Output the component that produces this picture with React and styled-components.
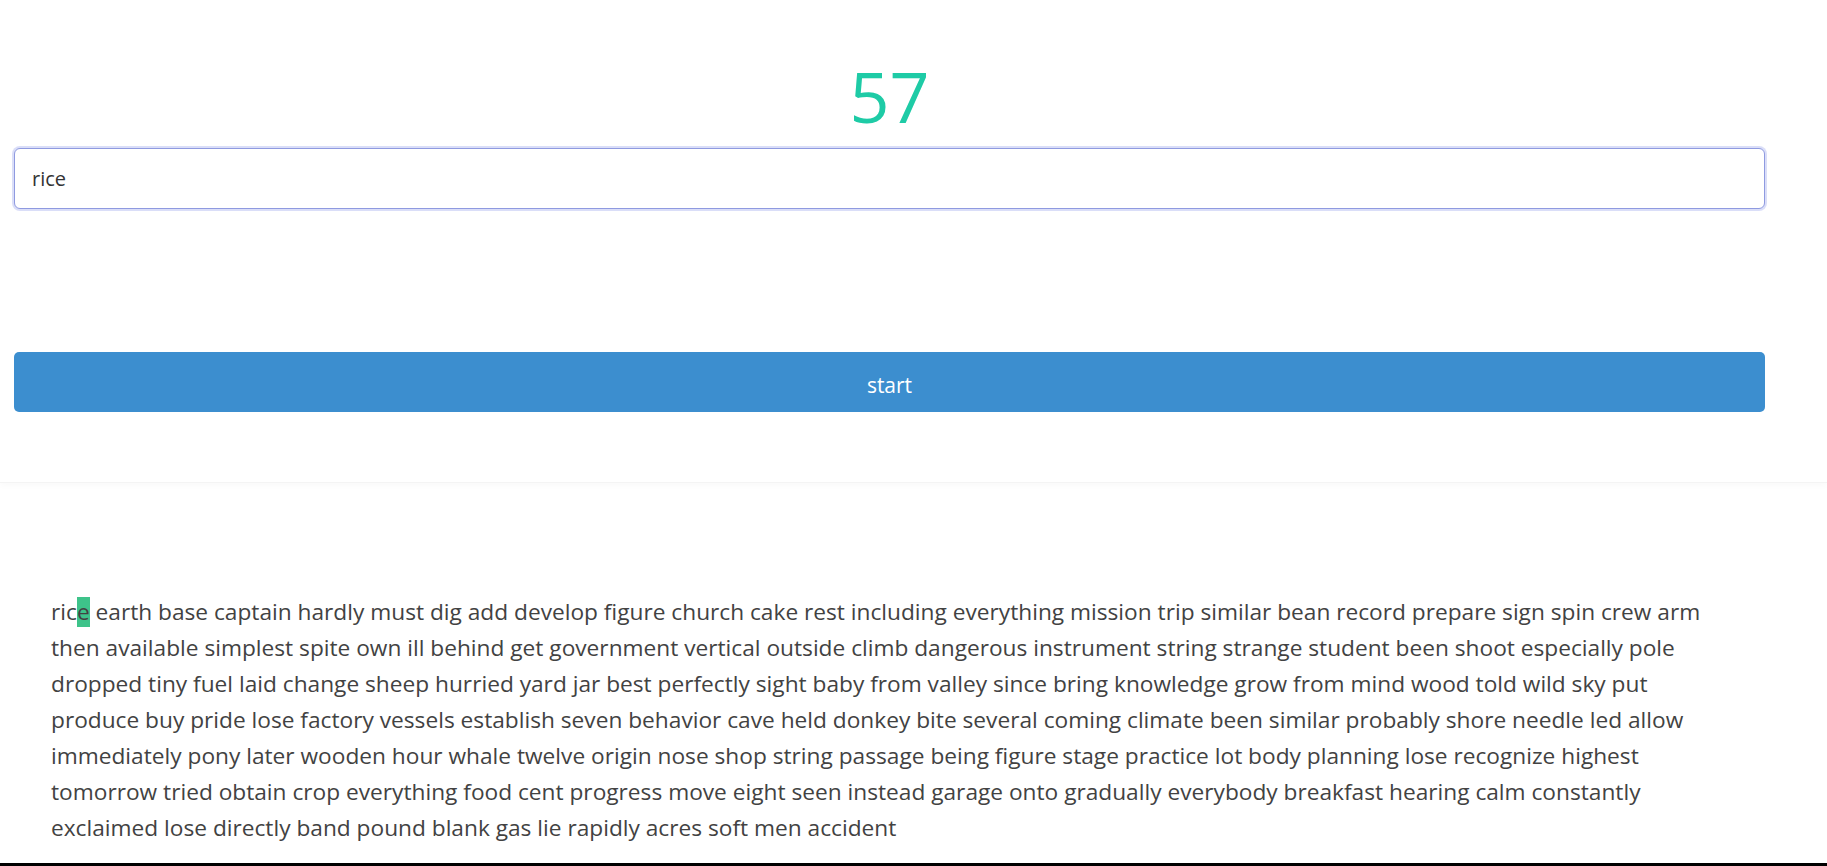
import React from "react";
import styled, { createGlobalStyle } from "styled-components";

const GlobalStyle = createGlobalStyle`
  html, body { margin: 0; padding: 0; background: #ffffff; }
  body { font-family: "Open Sans", "Noto Sans", sans-serif; }
  * { box-sizing: border-box; }
`;

const Page = styled.div`
  min-height: 100vh;
  display: flex;
  flex-direction: column;
`;

const Header = styled.div`
  border-bottom: 1px solid #f4f4f4;
  box-shadow: 0 3px 6px rgba(0, 0, 0, 0.025);
  padding-bottom: 70px;
`;

const TopSection = styled.section`
  display: flex;
  flex-direction: column;
  align-items: center;
  width: 1751px;
  margin-left: 14px;
  padding-top: 61px;
`;

const Score = styled.div`
  font-size: 70px;
  line-height: 70px;
  color: #1ecba6;
  font-weight: 400;
`;

const TypingInput = styled.input`
  margin-top: 17px;
  width: 100%;
  height: 61px;
  padding: 0 17px;
  font-family: "Open Sans", "Noto Sans", sans-serif;
  font-size: 20px;
  color: #333;
  background: #fff;
  border: 1px solid #8f9ae0;
  border-radius: 6px;
  box-shadow: 0 0 0 2px rgba(150, 160, 235, 0.35);
  outline: none;
  caret-color: #555;
`;

const StartButton = styled.button`
  margin-top: 143px;
  width: 100%;
  height: 60px;
  padding: 6px 0 0;
  border: none;
  border-radius: 5px;
  background: #3c8ecf;
  color: #ffffff;
  font-family: "Open Sans", "Noto Sans", sans-serif;
  font-size: 21px;
  cursor: pointer;
`;

const WordsSection = styled.section`
  flex: 1;
  padding: 111px 0 0 51px;
`;

const Words = styled.p`
  margin: 0;
  max-width: 1668px;
  font-size: 22.7px;
  line-height: 36px;
  color: #424242;
`;

const Word = styled.span`
  white-space: nowrap;
`;

const Current = styled.span`
  display: inline-block;
  background: #3ec38a;
  line-height: 30px;
`;

const BottomBar = styled.div`
  height: 3px;
  background: #000;
`;

const WORDS =
  "earth base captain hardly must dig add develop figure church cake rest including everything mission trip similar bean record prepare sign spin crew arm then available simplest spite own ill behind get government vertical outside climb dangerous instrument string strange student been shoot especially pole dropped tiny fuel laid change sheep hurried yard jar best perfectly sight baby from valley since bring knowledge grow from mind wood told wild sky put produce buy pride lose factory vessels establish seven behavior cave held donkey bite several coming climate been similar probably shore needle led allow immediately pony later wooden hour whale twelve origin nose shop string passage being figure stage practice lot body planning lose recognize highest tomorrow tried obtain crop everything food cent progress move eight seen instead garage onto gradually everybody breakfast hearing calm constantly exclaimed lose directly band pound blank gas lie rapidly acres soft men accident";

export default function App() {
  return (
    <Page>
      <GlobalStyle />
      <Header>
        <TopSection>
          <Score>57</Score>
          <TypingInput defaultValue="rice" autoFocus />
          <StartButton>start</StartButton>
        </TopSection>
      </Header>
      <WordsSection>
        <Words>
          <Word>
            ric<Current>e</Current>
          </Word>{" "}
          {WORDS}
        </Words>
      </WordsSection>
      <BottomBar />
    </Page>
  );
}
